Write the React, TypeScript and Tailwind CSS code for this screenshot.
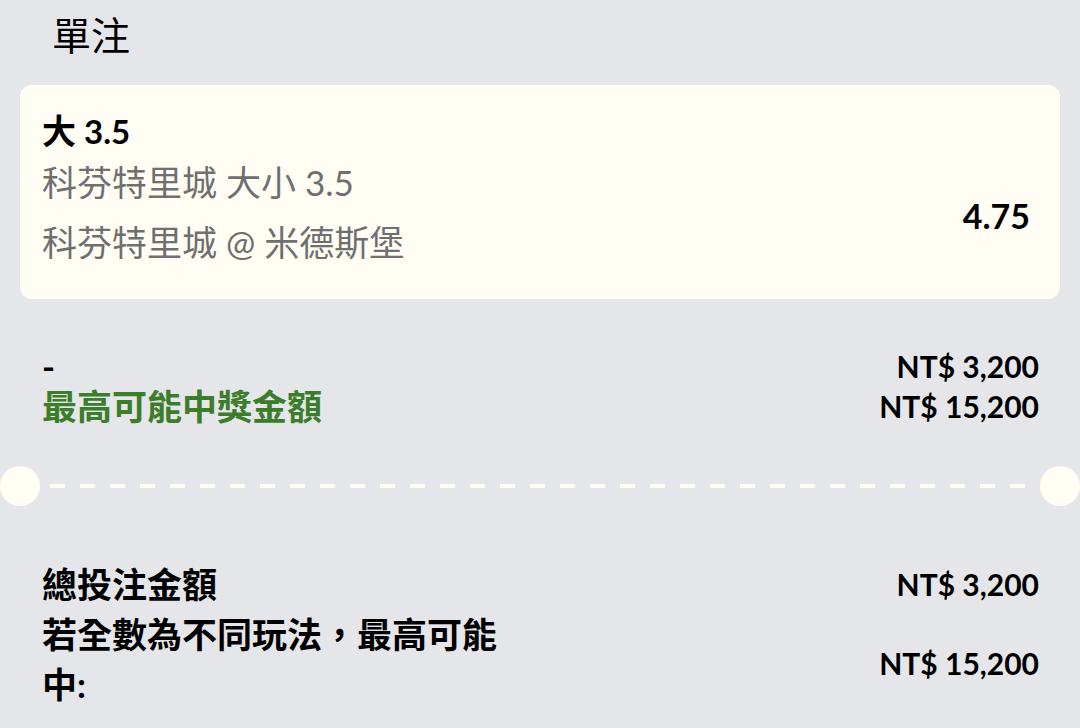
const font = "font-['Lato','Noto_Sans_CJK_TC',sans-serif]";
const cjk = "font-['Noto_Sans_CJK_TC','Noto_Sans_CJK_SC',sans-serif]";

function AmountRow({ label, amount, labelClass }: { label: string; amount: string; labelClass?: string }) {
  return (
    <div className="flex h-10 items-center justify-between">
      <span className={"text-[35px] font-bold leading-10 " + (labelClass ?? "text-black")}>{label}</span>
      <span className="text-[30px] font-bold leading-10 text-black">{amount}</span>
    </div>
  );
}

export default function App() {
  return (
    <div className={"min-h-[728px] w-[1080px] overflow-hidden bg-[#e5e6e9] " + font}>
      <div className={"h-[72px] pl-[52px] text-[39px] leading-[66px] text-black " + cjk}>單注</div>

      <div className="mx-5 mt-[13px] flex justify-between rounded-xl bg-[#fffdf4] px-[22px] pb-[26px] pt-6">
        <div>
          <p className="text-[33px] font-bold leading-[44px] text-black">
            <span className="text-[34px]">大</span> 3.5
          </p>
          <p className="text-[35px] leading-[58px] text-[#6f6f6f]">科芬特里城 大小 3.5</p>
          <p className="text-[35px] leading-[62px] text-[#6f6f6f]">科芬特里城 @ 米德斯堡</p>
        </div>
        <span className="mb-[37px] self-end pr-2 text-[34px] font-bold leading-10 text-black">4.75</span>
      </div>

      <div className="mt-[47px] pl-[42px] pr-[41px]">
        <AmountRow label="-" amount="NT$ 3,200" />
        <AmountRow label="最高可能中獎金額" amount="NT$ 15,200" labelClass="text-[#3b7d2a]" />
      </div>

      <div className="mt-[40px] flex items-center gap-[10px]">
        <div className="h-10 w-10 shrink-0 rounded-full bg-[#fffdf4]" />
        <div className="h-1 flex-1 bg-[repeating-linear-gradient(to_right,#fffdf4_0_15px,transparent_15px_30px)]" />
        <div className="h-10 w-10 shrink-0 rounded-full bg-[#fffdf4]" />
      </div>

      <div className="mt-[53px] pl-[42px] pr-[41px]">
        <div className="flex h-[50px] items-center justify-between">
          <span className="text-[35px] font-bold leading-[50px] text-black">總投注金額</span>
          <span className="text-[30px] font-bold text-black">NT$ 3,200</span>
        </div>
        <div className="flex items-center justify-between">
          <span className="max-w-[475px] text-[35px] font-bold leading-[50px] text-black">若全數為不同玩法，最高可能中:</span>
          <span className="pt-2 text-[30px] font-bold text-black">NT$ 15,200</span>
        </div>
      </div>
    </div>
  );
}
